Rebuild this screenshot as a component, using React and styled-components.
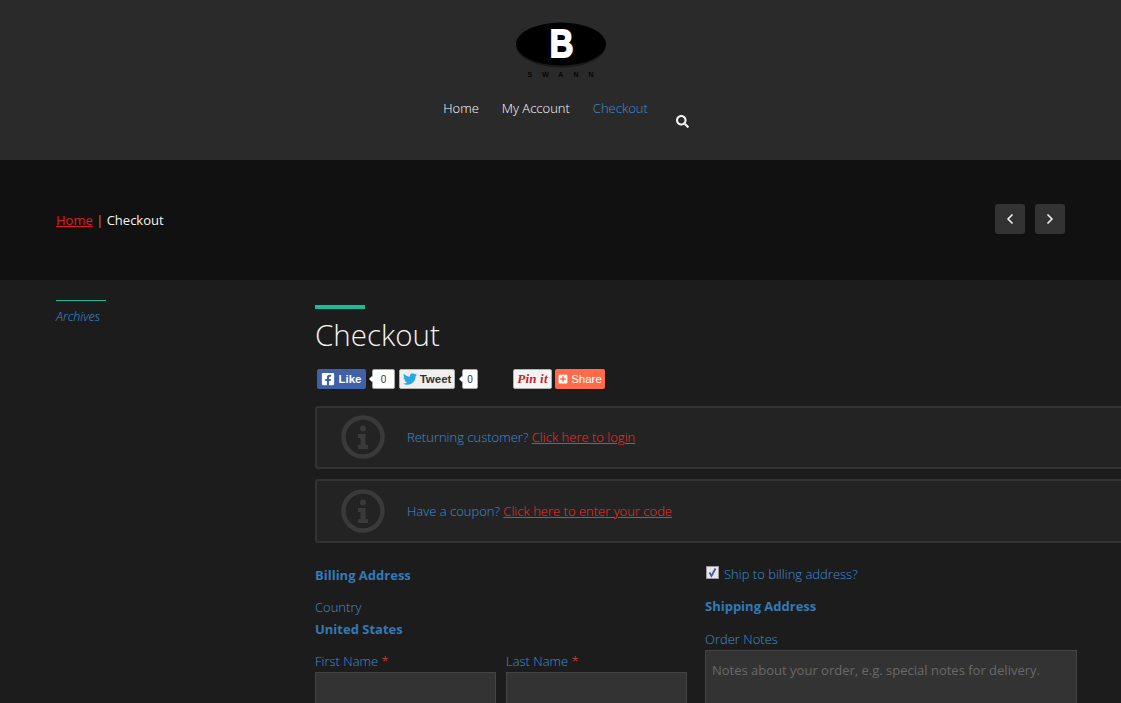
import React from 'react';
import styled, { createGlobalStyle } from 'styled-components';
import { FaSearch, FaFacebookSquare, FaTwitter, FaPlusSquare } from 'react-icons/fa';
import { ChevronLeft, ChevronRight } from 'lucide-react';

const Global = createGlobalStyle`
  html, body {
    margin: 0;
    padding: 0;
    height: 703px;
    overflow: hidden;
    background: #1c1c1c;
  }
  body {
    font-family: "Open Sans", "Liberation Sans", sans-serif;
    font-size: 13px;
    color: #337ab7;
  }
`;

const Page = styled.div`
  width: 1121px;
  height: 703px;
  overflow: hidden;
`;

const Header = styled.header`
  height: 160px;
  background: #2a2a2a;
  display: flex;
  flex-direction: column;
  align-items: center;
  padding-top: 22px;
  box-sizing: border-box;
`;

const LogoWrap = styled.div`
  display: flex;
  flex-direction: column;
  align-items: center;
  height: 57px;
`;

const LogoTagline = styled.div`
  font-family: "Liberation Sans", sans-serif;
  font-size: 7px;
  font-weight: 700;
  line-height: 8px;
  letter-spacing: 10px;
  margin-right: -10px;
  color: #050505;
  margin-top: 3px;
`;

const Nav = styled.nav`
  display: flex;
  align-items: flex-start;
  margin-top: 20px;
  margin-left: 11px;
`;

const NavLink = styled.a`
  font-size: 13px;
  font-weight: 300;
  line-height: 18px;
  margin-right: 23px;
  color: ${(p) => (p.$active ? '#3f8fd6' : '#ffffff')};
`;

const SearchButton = styled.span`
  display: flex;
  color: #f4f4f4;
  font-size: 13px;
  margin: 16px 0 0 5px;
`;

const Crumbs = styled.section`
  height: 120px;
  background: #111111;
  display: flex;
  align-items: center;
  justify-content: space-between;
  padding: 0 56px;
  box-sizing: border-box;
`;

const CrumbText = styled.div`
  font-size: 13px;
  color: #f4f4f4;
  white-space: pre;
`;

const CrumbLink = styled.a`
  color: #e01b1b;
  text-decoration: underline;
`;

const Sep = styled.span`
  color: #d98a2b;
`;

const Pager = styled.div`
  display: flex;
  gap: 10px;
  margin-top: -2px;
`;

const PagerButton = styled.span`
  width: 30px;
  height: 30px;
  border-radius: 3px;
  background: #333333;
  color: #f0f0f0;
  display: flex;
  align-items: center;
  justify-content: center;
`;

const Main = styled.main`
  display: flex;
  padding-left: 56px;
`;

const Sidebar = styled.aside`
  width: 259px;
  flex: none;
  padding-top: 20px;
`;

const SideRule = styled.div`
  width: 50px;
  height: 1px;
  background: #1abc9c;
`;

const SideLink = styled.a`
  display: block;
  font-size: 12.5px;
  font-style: italic;
  font-weight: 300;
  line-height: 16px;
  margin-top: 8px;
  color: #3f8fd6;
`;

const Content = styled.div`
  width: 820px;
  flex: none;
  padding-top: 25px;
`;

const TitleRule = styled.div`
  width: 50px;
  height: 4px;
  background: #1abc9c;
`;

const Title = styled.h1`
  font-size: 29.5px;
  font-weight: 300;
  line-height: 40px;
  color: #f4f4f4;
  margin: 6px 0 0;
`;

const Social = styled.div`
  display: flex;
  align-items: center;
  height: 20px;
  margin: 14px 0 17px 2px;
`;

const ShareButton = styled.span`
  width: ${(p) => p.$w}px;
  height: 20px;
  flex: none;
  box-sizing: border-box;
  border-radius: 2px;
  display: flex;
  align-items: center;
  justify-content: center;
  gap: 3px;
  font-family: "Liberation Sans", sans-serif;
  font-weight: ${(p) => (p.$weight ? p.$weight : 700)};
  font-size: 11.5px;
  margin-left: ${(p) => p.$gap || 0}px;
  background: ${(p) => p.$bg};
  color: ${(p) => p.$color};
  border: ${(p) => (p.$line ? `1px solid ${p.$line}` : 'none')};
`;

const Count = styled.span`
  position: relative;
  width: ${(p) => p.$w}px;
  height: 20px;
  flex: none;
  box-sizing: border-box;
  margin-left: ${(p) => p.$gap}px;
  background: #fff;
  border: 1px solid #a8a8a8;
  border-radius: 2px;
  color: #333;
  font-family: "Liberation Sans", sans-serif;
  font-size: 10px;
  display: flex;
  align-items: center;
  justify-content: center;

  &::before {
    content: '';
    position: absolute;
    left: -4px;
    top: 6px;
    width: 6px;
    height: 6px;
    background: #fff;
    transform: rotate(45deg) scale(0.7);
  }
`;

const PinText = styled.span`
  font-family: "Liberation Serif", serif;
  font-style: italic;
  font-weight: 700;
  font-size: 13px;
  letter-spacing: 0.2px;
`;

const Notice = styled.div`
  height: ${(p) => p.$h}px;
  box-sizing: border-box;
  margin-bottom: 10px;
  border: 2px solid #333333;
  border-radius: 3px;
  background: #232323;
  display: flex;
  align-items: center;
  padding: 0 0 1px 24px;
  font-size: 13px;
  font-weight: 300;
  color: #3f8fd6;
`;

const NoticeIcon = styled.svg`
  width: 44px;
  height: 44px;
  flex: none;
  margin-right: 22px;
`;

const NoticeLink = styled.a`
  color: #ff2a2a;
  text-decoration: underline;
`;

const Columns = styled.div`
  display: grid;
  grid-template-columns: 372px 372px;
  column-gap: 18px;
  margin-top: 23px;
`;

const Heading = styled.h3`
  font-size: 13px;
  font-weight: 700;
  line-height: 18px;
  margin: ${(p) => p.$top || 0}px 0 0;
`;

const Label = styled.label`
  display: block;
  font-size: 13px;
  font-weight: 300;
  line-height: 18px;
  color: #3f8fd6;
`;

const Required = styled.span`
  color: #e0483f;
`;

const CountryBlock = styled.div`
  margin-top: 14px;
`;

const NameRow = styled.div`
  display: grid;
  grid-template-columns: 181px 181px;
  column-gap: 10px;
  margin-top: 14px;
`;

const Input = styled.div`
  height: 60px;
  margin-top: 2px;
  box-sizing: border-box;
  background: #333333;
  border: 1px solid #444444;
`;

const ShipRow = styled.div`
  display: flex;
  align-items: center;
  gap: 5px;
  height: 18px;
  margin: -1px 0 14px 1px;
`;

const CheckBox = styled.span`
  width: 13px;
  height: 13px;
  box-sizing: border-box;
  border: 1px solid #9a9a9a;
  background: #e4e6f0;
  display: flex;
  margin-top: -3px;
`;

const Notes = styled.div`
  height: 80px;
  margin-top: 2px;
  box-sizing: border-box;
  background: #333333;
  border: 1px solid #444444;
  padding: 10px 6px;
  font-size: 13px;
  line-height: 18px;
  color: #696969;
`;

const OrderBlock = styled.div`
  margin-top: 15px;
`;

function InfoIcon() {
  return (
    <NoticeIcon viewBox="0 0 44 44">
      <circle cx="22" cy="22" r="19.5" fill="none" stroke="#3a3a3a" strokeWidth="4.5" />
      <circle cx="22" cy="13.5" r="3" fill="#3a3a3a" />
      <path d="M17 19h7.5v11H27v4H17v-4h2.5v-7H17z" fill="#3a3a3a" />
    </NoticeIcon>
  );
}

function Logo() {
  return (
    <svg width="92" height="46" viewBox="0 0 92 46">
      <ellipse cx="46" cy="23.5" rx="45" ry="22" fill="#1a1a1a" />
      <ellipse cx="46" cy="22" rx="45" ry="21.5" fill="#000" />
      <text
        x="0"
        y="34.5"
        transform="translate(46.5 0) scale(0.84 1)"
        textAnchor="middle"
        fontFamily="Liberation Sans, sans-serif"
        fontWeight="700"
        fontSize="39"
        fill="#fff"
        stroke="#fff"
        strokeWidth="1.8"
      >
        B
      </text>
    </svg>
  );
}

export default function App() {
  return (
    <Page>
      <Global />
      <Header>
        <LogoWrap>
          <Logo />
          <LogoTagline>SWANN</LogoTagline>
        </LogoWrap>
        <Nav>
          <NavLink>Home</NavLink>
          <NavLink>My Account</NavLink>
          <NavLink $active>Checkout</NavLink>
          <SearchButton><FaSearch /></SearchButton>
        </Nav>
      </Header>

      <Crumbs>
        <CrumbText><CrumbLink>Home</CrumbLink> <Sep>|</Sep> Checkout</CrumbText>
        <Pager>
          <PagerButton><ChevronLeft size={16} strokeWidth={2.6} /></PagerButton>
          <PagerButton><ChevronRight size={16} strokeWidth={2.6} /></PagerButton>
        </Pager>
      </Crumbs>

      <Main>
        <Sidebar>
          <SideRule />
          <SideLink>Archives</SideLink>
        </Sidebar>
        <Content>
          <TitleRule />
          <Title>Checkout</Title>
          <Social>
            <ShareButton $w={49} $bg="#4060a8" $color="#fff"><FaFacebookSquare size={14} />Like</ShareButton>
            <Count $w={23} $gap={6}>0</Count>
            <ShareButton $w={56} $gap={4} $bg="#f0f0f0" $color="#333" $line="#b0b0b0"><FaTwitter size={14} color="#2ba6e0" />Tweet</ShareButton>
            <Count $w={16} $gap={7}>0</Count>
            <ShareButton $w={39} $gap={35} $bg="#f4f4f4" $color="#c8232c" $line="#b0b0b0"><PinText>Pin it</PinText></ShareButton>
            <ShareButton $w={50} $gap={3} $bg="#ff6b4a" $color="#fff" $weight={400}><FaPlusSquare size={10} />Share</ShareButton>
          </Social>
          <Notice $h={63}>
            <InfoIcon />
            <span>Returning customer? <NoticeLink>Click here to login</NoticeLink></span>
          </Notice>
          <Notice $h={64}>
            <InfoIcon />
            <span>Have a coupon? <NoticeLink>Click here to enter your code</NoticeLink></span>
          </Notice>
          <Columns>
            <div>
              <Heading>Billing Address</Heading>
              <CountryBlock>
                <Label>Country</Label>
                <Heading $top={4}>United States</Heading>
              </CountryBlock>
              <NameRow>
                <div>
                  <Label>First Name <Required>*</Required></Label>
                  <Input />
                </div>
                <div>
                  <Label>Last Name <Required>*</Required></Label>
                  <Input />
                </div>
              </NameRow>
            </div>
            <div>
              <ShipRow>
                <CheckBox>
                  <svg width="11" height="11" viewBox="0 0 11 11">
                    <path d="M2.5 5.5l2 3.5 4-7.5" fill="none" stroke="#4456a6" strokeWidth="1.8" />
                  </svg>
                </CheckBox>
                <Label>Ship to billing address?</Label>
              </ShipRow>
              <Heading>Shipping Address</Heading>
              <OrderBlock>
                <Label>Order Notes</Label>
                <Notes>Notes about your order, e.g. special notes for delivery.</Notes>
              </OrderBlock>
            </div>
          </Columns>
        </Content>
      </Main>
    </Page>
  );
}
